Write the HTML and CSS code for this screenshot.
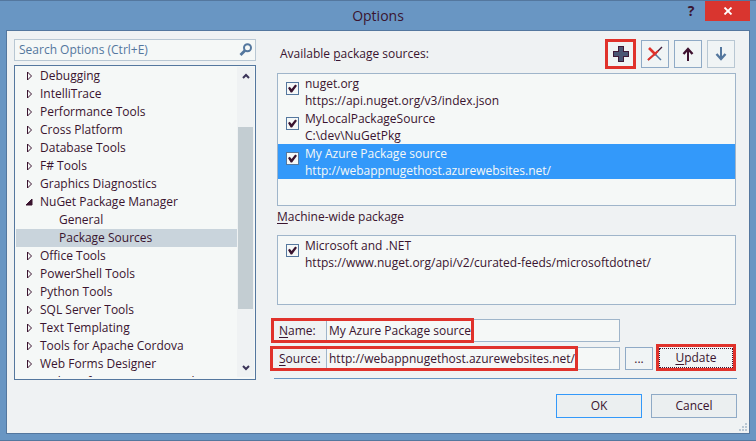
FILE: index.html
```html
<!DOCTYPE html>
<html lang="en">
<head>
<meta charset="utf-8">
<title>Options</title>
<link rel="stylesheet" href="styles.css">
</head>
<body>
<div class="window">
  <header class="titlebar">
    <h1 class="title">Options</h1>
    <button class="help" type="button">?</button>
    <button class="close" type="button" aria-label="Close"><svg width="10" height="8" viewBox="0 0 10 8"><path d="M1.5 .5l7 7M8.5 .5l-7 7" stroke="#fff" stroke-width="1.8"/></svg></button>
  </header>
  <main class="dialog">
    <aside class="side">
      <div class="search">
        <input class="search-input" type="text" placeholder="Search Options (Ctrl+E)" aria-label="Search Options">
        <svg width="14" height="14" viewBox="0 0 14 14" fill="none" stroke="#54779e"><circle cx="8.5" cy="4.8" r="3.5" stroke-width="2"/><path d="M6 7.5L1.5 12" stroke-width="2.8"/></svg>
      </div>
      <div class="tree-box">
        <ul class="tree">
          <li class="node"><svg class="arrow" viewBox="0 0 7 10"><path d="M1.5 1v8L5.5 5z"/></svg>Debugging</li>
          <li class="node"><svg class="arrow" viewBox="0 0 7 10"><path d="M1.5 1v8L5.5 5z"/></svg>IntelliTrace</li>
          <li class="node"><svg class="arrow" viewBox="0 0 7 10"><path d="M1.5 1v8L5.5 5z"/></svg>Performance Tools</li>
          <li class="node"><svg class="arrow" viewBox="0 0 7 10"><path d="M1.5 1v8L5.5 5z"/></svg>Cross Platform</li>
          <li class="node"><svg class="arrow" viewBox="0 0 7 10"><path d="M1.5 1v8L5.5 5z"/></svg>Database Tools</li>
          <li class="node"><svg class="arrow" viewBox="0 0 7 10"><path d="M1.5 1v8L5.5 5z"/></svg>F# Tools</li>
          <li class="node"><svg class="arrow" viewBox="0 0 7 10"><path d="M1.5 1v8L5.5 5z"/></svg>Graphics Diagnostics</li>
          <li class="node"><svg class="arrow open" viewBox="0 0 7 10"><path d="M6 2v6H0z"/></svg>NuGet Package Manager</li>
          <li class="node child">General</li>
          <li class="node child selected">Package Sources</li>
          <li class="node"><svg class="arrow" viewBox="0 0 7 10"><path d="M1.5 1v8L5.5 5z"/></svg>Office Tools</li>
          <li class="node"><svg class="arrow" viewBox="0 0 7 10"><path d="M1.5 1v8L5.5 5z"/></svg>PowerShell Tools</li>
          <li class="node"><svg class="arrow" viewBox="0 0 7 10"><path d="M1.5 1v8L5.5 5z"/></svg>Python Tools</li>
          <li class="node"><svg class="arrow" viewBox="0 0 7 10"><path d="M1.5 1v8L5.5 5z"/></svg>SQL Server Tools</li>
          <li class="node"><svg class="arrow" viewBox="0 0 7 10"><path d="M1.5 1v8L5.5 5z"/></svg>Text Templating</li>
          <li class="node"><svg class="arrow" viewBox="0 0 7 10"><path d="M1.5 1v8L5.5 5z"/></svg>Tools for Apache Cordova</li>
          <li class="node"><svg class="arrow" viewBox="0 0 7 10"><path d="M1.5 1v8L5.5 5z"/></svg>Web Forms Designer</li>
          <li class="node"><svg class="arrow" viewBox="0 0 7 10"><path d="M1.5 1v8L5.5 5z"/></svg>Web Performance Test Tools</li>
        </ul>
        <div class="scrollbar">
          <svg class="chevron" viewBox="0 0 8 6"><path d="M1 5l3-3 3 3"/></svg>
          <div class="track"><div class="thumb"></div></div>
          <svg class="chevron" viewBox="0 0 8 6"><path d="M1 1l3 3 3-3"/></svg>
        </div>
      </div>
    </aside>
    <section class="panel">
      <div class="toolbar">
        <span class="toolbar-label">Available <u>p</u>ackage sources:</span>
        <button class="tool marked" type="button" aria-label="Add"><svg width="16" height="16" viewBox="0 0 16 16"><path d="M5 0h6v5h5v6h-5v5H5v-5H0V5h5z" fill="#3e1a38"/><path d="M6 1h4v5h5v4h-5v5H6v-5H1V6h5z" fill="#4a5674"/></svg></button>
        <button class="tool" type="button" aria-label="Remove"><svg width="16" height="16" viewBox="0 0 16 16" fill="none"><path d="M15 1L8 8l-7 6" stroke="#3e1a38" stroke-width="1.4"/><path d="M2 2l7 7" stroke="#e0322b" stroke-width="2.6"/><path d="M8 8l6 6" stroke="#54779e" stroke-width="1.5"/><path d="M11 5L1 14" stroke="#e0322b" stroke-width="2"/></svg></button>
        <button class="tool" type="button" aria-label="Move up"><svg width="12" height="14" viewBox="0 0 12 14" fill="none" stroke="#3e1230"><path d="M6 14V2" stroke-width="2"/><path d="M1.5 7L6 2l4.500 5" stroke-width="2.4"/></svg></button>
        <button class="tool pale" type="button" aria-label="Move down"><svg width="12" height="14" viewBox="0 0 12 14" fill="none" stroke="#54779e"><path d="M6 0v12" stroke-width="2"/><path d="M1.500 7L6 12l4.500-5" stroke-width="2.4"/></svg></button>
      </div>
      <div class="list sources">
        <label class="item"><input class="check" type="checkbox" checked><span>nuget.org<br>https://api.nuget.org/v3/index.json</span></label>
        <label class="item"><input class="check" type="checkbox" checked><span>MyLocalPackageSource<br>C:\dev\NuGetPkg</span></label>
        <label class="item active"><input class="check" type="checkbox" checked><span>My Azure Package source<br>http://webappnugethost.azurewebsites.net/</span></label>
      </div>
      <div class="section-label"><u>M</u>achine-wide package</div>
      <div class="list machine">
        <label class="item"><input class="check" type="checkbox" checked><span>Microsoft and .NET<br>https://www.nuget.org/api/v2/curated-feeds/microsoftdotnet/</span></label>
      </div>
      <div class="fields">
        <label class="field-label" for="name"><u>N</u>ame:</label>
        <input class="field" id="name" type="text" value="My Azure Package source">
        <span class="mark mark-name"></span>
      </div>
      <div class="fields">
        <label class="field-label" for="source"><u>S</u>ource:</label>
        <input class="field" id="source" type="text" value="http://webappnugethost.azurewebsites.net/">
        <button class="browse" type="button">...</button>
        <button class="update" type="button"><span><u>U</u>pdate</span></button>
        <span class="mark mark-source"></span>
      </div>
      <footer class="actions">
        <button class="action primary" type="button">OK</button>
        <button class="action" type="button">Cancel</button>
      </footer>
    </section>
    <svg class="grip" width="8" height="8" viewBox="0 0 8 8" fill="#b8c7d3"><path d="M6 0h2v2H6zM3 3h2v2H3zM6 3h2v2H6zM0 6h2v2H0zM3 6h2v2H3zM6 6h2v2H6z"/></svg>
  </main>
</div>
</body>
</html>
```
FILE: styles.css
```css
* { box-sizing: border-box; }
body {
  margin: 0;
  color: #3a142f;
  font: 12px/18px "Open Sans", "Noto Sans", sans-serif;
}
button, input { font: inherit; color: inherit; margin: 0; padding: 0; }
button { display: flex; align-items: center; justify-content: center; }
u { text-underline-offset: 2px; }

.window {
  display: flex;
  flex-direction: column;
  min-height: 100vh;
  padding: 0 6px 6px;
  background: #6996c3;
  border-top: 1px solid #54779e;
  border-bottom: 1px solid #54779e;
}
.titlebar { position: relative; display: flex; justify-content: flex-end; height: 29px; }
.title {
  position: absolute;
  inset: 0;
  margin: 0;
  font-size: 14px;
  font-weight: 400;
  line-height: 29px;
  text-align: center;
}
.help {
  position: relative;
  width: 28px;
  height: 20px;
  border: 0;
  background: none;
  font-size: 14px;
  font-weight: 700;
}
.close { position: relative; width: 45px; height: 20px; border: 0; background: #d9352f; }

.dialog {
  position: relative;
  display: flex;
  flex: 1;
  gap: 14px;
  padding: 8px 12px 14px 7px;
  background: #eff2f3;
  border: 1px solid #54779e;
}
.side { display: flex; flex-direction: column; gap: 4px; flex: 0 0 242px; height: 341px; }
.search {
  display: flex;
  align-items: center;
  height: 22px;
  padding: 0 2px 0 4px;
  background: #f5f8f7;
  border: 1px solid #b8c7d3;
}
.search-input { flex: 1; min-width: 0; border: 0; outline: 0; background: none; }
.search-input::placeholder { color: #54779e; opacity: 1; }
.tree-box {
  display: flex;
  flex: 1;
  min-height: 0;
  padding: 1px 1px 2px;
  background: #f5f8f7;
  border: 1px solid #54779e;
}
.tree { flex: 1; margin: 0; padding: 0; list-style: none; overflow: hidden; }
.node { display: flex; align-items: center; gap: 7px; padding-left: 10px; white-space: nowrap; }
.child { padding-left: 43px; }
.selected { background: #c9d4dc; }
.arrow { width: 7px; height: 10px; fill: none; stroke: #3a142f; }
.open { fill: #3a142f; }
.scrollbar {
  display: flex;
  flex-direction: column;
  align-items: center;
  width: 17px;
  padding: 6px 1px;
  background: #eff2f3;
}
.chevron { width: 8px; height: 6px; fill: none; stroke: #3b3458; stroke-width: 2; }
.track { flex: 1; width: 100%; padding: 48px 0 56px; }
.thumb { height: 100%; background: #c3cdd2; }

.panel { flex: 1; min-width: 0; }
.toolbar { display: flex; align-items: center; gap: 5px; height: 30px; padding: 0 2px 0 10px; }
.toolbar-label { flex: 1; }
.tool { width: 28px; height: 28px; background: #f0f4f5; border: 1px solid #8faac6; }
.marked { width: 31px; height: 30px; border: 3px solid #e0322b; }
.pale { border-color: #b8c7d3; }
.list { margin: 0 1px 0 7px; background: #f5f8f7; border: 1px solid #9fb5ca; }
.sources { height: 133px; margin-top: 4px; }
.machine { height: 70px; }
.item { display: flex; gap: 6px; height: 35px; padding: 1px 0 0 8px; line-height: 17px; }
.active { color: #f5f8f7; background: #3399fa; }
.check {
  flex: none;
  display: grid;
  place-items: center;
  appearance: none;
  width: 13px;
  height: 13px;
  margin-top: 7px;
  background: #f5f8f7;
  border: 1px solid #54779e;
}
.check:checked::before {
  content: "";
  width: 9px;
  height: 9px;
  background: #3a142f;
  clip-path: polygon(0 45%, 20% 30%, 40% 55%, 80% 5%, 100% 20%, 45% 95%, 30% 95%);
}
.section-label { padding: 2px 7px 0; height: 29px; }

.fields { position: relative; display: flex; height: 23px; margin-top: 14px; padding-left: 9px; }
.fields + .fields { margin-top: 5px; }
.field-label { width: 47px; line-height: 23px; }
.field {
  width: 294px;
  padding: 0 2px;
  background: #f5f8f7;
  border: 1px solid #9fb5ca;
  outline: 0;
}
.browse { width: 28px; margin-left: 5px; background: #f0f4f5; border: 1px solid #8faac6; }
.update {
  width: 80px;
  height: 27px;
  margin: -3px 0 0 3px;
  background: #f0f4f5;
  border: 3px solid #e0322b;
}
.update span {
  width: 100%;
  border: 1px dotted #3a142f;
}
.mark { position: absolute; border: 3px solid #e0322b; pointer-events: none; }
.mark-name { top: -1px; left: 1px; width: 203px; height: 25px; }
.mark-source { top: -1px; left: 0; width: 308px; height: 25px; }
.actions {
  display: flex;
  justify-content: flex-end;
  gap: 9px;
  margin: 8px 0 0 4px;
  padding-top: 15px;
  border-top: 1px solid #6996c3;
}
.action { width: 86px; height: 24px; background: #ebeff0; border: 1px solid #8faac6; }
.primary { border-color: #3399fa; }
.grip { position: absolute; right: 2px; bottom: 2px; }
```
